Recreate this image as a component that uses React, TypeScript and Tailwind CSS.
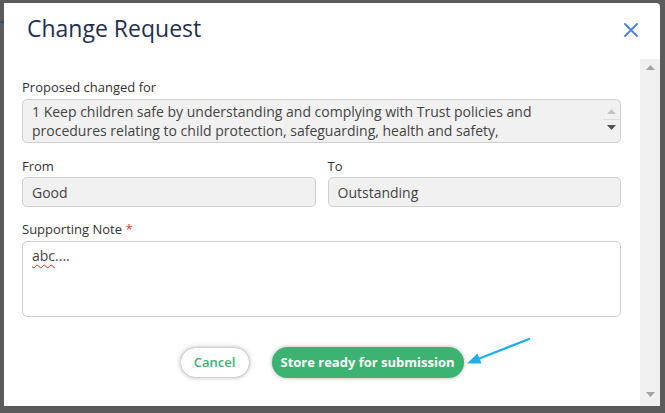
const FROM_TO = [
  { label: 'From', value: 'Good' },
  { label: 'To', value: 'Outstanding' },
] as const

function Tri({ down, color }: { down?: boolean; color: string }) {
  return (
    <svg width="9" height="5" viewBox="0 0 9 5" className="block">
      <polygon points={down ? '0,0 9,0 4.5,5' : '0,5 9,5 4.5,0'} fill={color} />
    </svg>
  )
}

export default function App() {
  return (
    <div className="relative h-[413px] w-[665px] overflow-hidden bg-[#5b5b5b] pl-[4px] pt-[3px] font-['Open_Sans',sans-serif]">
      {/* bits of the page behind the overlay */}
      <div className="absolute left-0 top-[21px] h-[2px] w-[4px] bg-[#2f4a86]" />

      <div className="flex h-[403px] w-[656px] flex-col rounded-tr-[4px] bg-white">
        {/* Header */}
        <div className="flex h-[56px] shrink-0 items-start justify-between pl-[23px] pr-[22px] pt-[9px]">
          <h1 className="text-[23px] leading-[32px] font-normal text-[#1f2f4f]">Change Request</h1>
          <button className="mt-[11px] text-[#4a7ff0]" aria-label="Close">
            <svg width="14" height="14" viewBox="0 0 14 14" className="block">
              <path d="M1 1 L13 13 M13 1 L1 13" stroke="currentColor" strokeWidth="1.8" strokeLinecap="round" />
            </svg>
          </button>
        </div>

        {/* Body */}
        <div className="flex min-h-0 flex-1">
          <div className="flex-1 pl-[18px] pr-[19px] pt-[19px]">
            <p className="text-[13px] leading-[18px] text-[#333]">Proposed changed for</p>
            <div className="mt-[3px] flex h-[44px] overflow-hidden rounded-[5px] border border-[#cfcfcf] bg-[#f1f1f1]">
              <div className="flex-1 pl-[9px] pt-[2px] text-[14px] leading-[19px] text-[#444]">
                <span className="block whitespace-nowrap">1 Keep children safe by understanding and complying with Trust policies and</span>
                <span className="block whitespace-nowrap">procedures relating to child protection, safeguarding, health and safety,</span>
              </div>
              <div className="flex w-[17px] flex-col items-center pt-[9px]">
                <Tri color="#c4c4c4" />
                <div className="mt-[5px] h-px w-full bg-[#dcdcdc]" />
                <div className="mt-[5px]">
                  <Tri down color="#505050" />
                </div>
              </div>
            </div>

            <div className="mt-[14px] grid grid-cols-2 gap-x-[12px]">
              {FROM_TO.map(({ label, value }) => (
                <div key={label}>
                  <p className="text-[13px] leading-[18px] text-[#333]">{label}</p>
                  <div className="mt-[2px] flex h-[30px] items-center rounded-[5px] border border-[#cfcfcf] bg-[#f1f1f1] px-[9px] text-[14px] leading-[19px] text-[#444]">
                    {value}
                  </div>
                </div>
              ))}
            </div>

            <p className="mt-[13px] text-[13px] leading-[18px] text-[#333]">
              Supporting Note <span className="text-[#e53935]">*</span>
            </p>
            <div className="mt-[3px] h-[76px] rounded-[5px] border border-[#cfcfcf] bg-white px-[9px] pt-[4px] text-[14px] leading-[19px] text-[#444]">
              <span className="underline decoration-[#e02020] decoration-wavy decoration-1 underline-offset-[3px]">abc</span>....
            </div>

            <div className="mt-[30px] flex justify-center gap-[22px]">
              <button className="h-[31px] w-[70px] rounded-full border border-[#d0d0d0] bg-white text-[13px] font-semibold text-[#3cb371] shadow-[0_0_4px_rgba(0,0,0,0.25)]">
                Cancel
              </button>
              <button className="h-[31px] w-[192px] rounded-full bg-[#3cb371] text-[13px] font-bold text-white shadow-[0_0_4px_rgba(0,0,0,0.3)]">
                Store ready for submission
              </button>
            </div>
          </div>

          {/* Scrollbar */}
          <div className="flex w-[20px] shrink-0 flex-col items-center justify-between bg-[#f0f0f0] pb-[9px] pt-[6px]">
            <Tri color="#a3a3a3" />
            <Tri down color="#a3a3a3" />
          </div>
        </div>
      </div>

      {/* annotation arrow */}
      <svg className="pointer-events-none absolute left-0 top-0" width="665" height="413">
        <line x1="529" y1="339" x2="478" y2="359" stroke="#1bb1ef" strokeWidth="2.2" strokeLinecap="round" />
        <polygon points="467,363.5 481.5,363.5 477.5,353.5" fill="#1bb1ef" />
      </svg>
    </div>
  )
}
